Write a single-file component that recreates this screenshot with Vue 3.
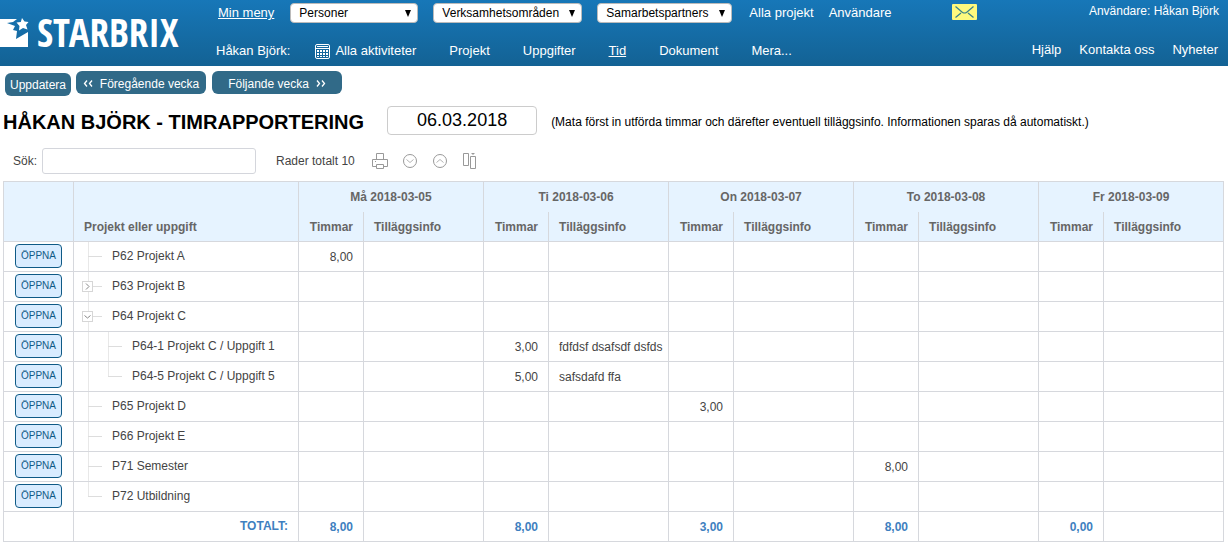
<script setup>
import { ref } from 'vue'

const date = ref('06.03.2018')
const search = ref('')

const days = ['Må 2018-03-05', 'Ti 2018-03-06', 'On 2018-03-07', 'To 2018-03-08', 'Fr 2018-03-09']

const rows = [
  { name: 'P62 Projekt A', level: 0, cells: { 0: ['8,00', ''] } },
  { name: 'P63 Projekt B', level: 0, toggle: 'closed', cells: {} },
  { name: 'P64 Projekt C', level: 0, toggle: 'open', cells: {} },
  { name: 'P64-1 Projekt C / Uppgift 1', level: 1, cells: { 1: ['3,00', 'fdfdsf dsafsdf dsfds'] } },
  { name: 'P64-5 Projekt C / Uppgift 5', level: 1, last: true, cells: { 1: ['5,00', 'safsdafd ffa'] } },
  { name: 'P65 Projekt D', level: 0, cells: { 2: ['3,00', ''] } },
  { name: 'P66 Projekt E', level: 0, cells: {} },
  { name: 'P71 Semester', level: 0, cells: { 3: ['8,00', ''] } },
  { name: 'P72 Utbildning', level: 0, last: true, cells: {} },
]

const totals = ['8,00', '8,00', '3,00', '8,00', '0,00']

const menus = ['Personer', 'Verksamhetsområden', 'Samarbetspartners']
</script>

<template>
  <div class="page">
    <header class="top">
      <a href="#" class="logo">
        <svg width="29" height="29" viewBox="0 0 29 29" aria-hidden="true">
          <path fill="#fff" d="M0 1H17L13 4L7 5L15 8L13 12L17 13L16 21L28 14V29H0Z" />
          <path fill="#fff" d="M22 0L24.500 3.500L28.500 4L26 7L27.500 11.500L23 10L19 12.500L19.500 8L16.500 4.500L20.800 4Z" />
        </svg>
        <span class="brand">STARBRIX</span>
      </a>

      <div class="nav">
        <nav class="line line1">
          <a href="#" class="my current">Min meny</a>
          <span v-for="(m, i) in menus" :key="m" class="pick" :class="'pick' + i">
            <select :aria-label="m"><option>{{ m }}</option></select>
            <svg width="6" height="7" viewBox="0 0 6 7" aria-hidden="true"><path d="M0 0H6L3 7Z" /></svg>
          </span>
          <a href="#" class="all">Alla projekt</a>
          <a href="#">Användare</a>
          <a href="#" class="mail" aria-label="Meddelanden">
            <svg width="25" height="16" viewBox="0 0 25 16">
              <rect width="25" height="16" rx="1" fill="#fdf97e" />
              <path d="M3.500 2.500L10.500 8.500Q12.500 9.500 14.500 8.500L21.500 2.500M3.500 13.500L9 9M21.500 13.500L16 9" fill="none" stroke="#36808c" stroke-width="1.200" />
            </svg>
          </a>
        </nav>
        <nav class="line line2">
          <span>Håkan Björk:</span>
          <a href="#" class="activities">
            <svg width="15" height="15" viewBox="0 0 15 15" aria-hidden="true">
              <rect x=".5" y=".5" width="14" height="14" rx="1.500" fill="none" stroke="#fff" />
              <path d="M2 2.500H13M1 4.500H14" stroke="#fff" />
              <path fill="#fff" d="M2 6H4V8H2ZM5 6H7V8H5ZM8 6H10V8H8ZM11 6H13V8H11ZM2 9H4V11H2ZM5 9H7V11H5ZM8 9H10V11H8ZM11 9H13V11H11ZM2 12H4V13H2ZM5 12H7V13H5ZM8 12H10V13H8ZM11 12H13V13H11Z" />
            </svg>
            Alla aktiviteter
          </a>
          <a href="#">Projekt</a>
          <a href="#">Uppgifter</a>
          <a href="#" class="current">Tid</a>
          <a href="#">Dokument</a>
          <a href="#">Mera...</a>
        </nav>
      </div>

      <div class="user">
        <span class="who">Användare: Håkan Björk</span>
        <nav class="help">
          <a href="#">Hjälp</a>
          <a href="#">Kontakta oss</a>
          <a href="#">Nyheter</a>
        </nav>
      </div>
    </header>

    <main>
      <div class="weeks">
        <button type="button" class="refresh">Uppdatera</button>
        <button type="button" class="week">
          <svg width="10" height="7" viewBox="0 0 10 7" aria-hidden="true"><path d="M4 .5L1.500 3.500L4 6.500M9 .5L6.500 3.500L9 6.500" /></svg>
          Föregående vecka
        </button>
        <button type="button" class="week">
          Följande vecka
          <svg width="10" height="7" viewBox="0 0 10 7" aria-hidden="true"><path d="M1 .5L3.500 3.500L1 6.500M6 .5L8.500 3.500L6 6.500" /></svg>
        </button>
      </div>

      <div class="heading">
        <h1>HÅKAN BJÖRK - TIMRAPPORTERING</h1>
        <input v-model="date" class="date" type="text" aria-label="Datum" />
        <p>(Mata först in utförda timmar och därefter eventuell tilläggsinfo. Informationen sparas då automatiskt.)</p>
      </div>

      <div class="tools">
        <label for="search">Sök:</label>
        <input id="search" v-model="search" class="search" type="text" />
        <span class="count">Rader totalt 10</span>
        <button type="button" class="icon" aria-label="Skriv ut">
          <svg width="16" height="16" viewBox="0 0 16 16">
            <path d="M4.500 6V.5H11.500V6M4 13.500H.5V6.500H15.500V13.500H12M4.500 11.500H11.500V15.500H4.500ZM3 8.500H4" />
          </svg>
        </button>
        <button type="button" class="icon" aria-label="Visa alla">
          <svg width="16" height="16" viewBox="0 0 16 16"><circle cx="8" cy="8" r="6.500" /><path class="soft" d="M4.500 6.500L8 9.500L11.500 6.500" /></svg>
        </button>
        <button type="button" class="icon" aria-label="Dölj alla">
          <svg width="16" height="16" viewBox="0 0 16 16"><circle cx="8" cy="8" r="6.500" /><path class="soft" d="M4.500 9.500L8 6.500L11.500 9.500" /></svg>
        </button>
        <button type="button" class="icon" aria-label="Kolumner">
          <svg width="16" height="16" viewBox="0 0 16 16">
            <path d="M1.500 .5H6.500V12.500H1.500ZM8.500 3.500H13.500V15.500H8.500Z" />
            <path d="M9 0H13L11 2Z" class="solid" />
          </svg>
        </button>
      </div>

      <table>
        <colgroup>
          <col class="c-open" />
          <col class="c-name" />
          <template v-for="d in days" :key="d"><col class="c-time" /><col class="c-info" /></template>
        </colgroup>
        <thead>
          <tr>
            <th rowspan="2"></th>
            <th rowspan="2" class="left low">Projekt eller uppgift</th>
            <th v-for="d in days" :key="d" colspan="2" class="day">{{ d }}</th>
          </tr>
          <tr>
            <template v-for="d in days" :key="d">
              <th class="right sub">Timmar</th>
              <th class="left sub">Tilläggsinfo</th>
            </template>
          </tr>
        </thead>
        <tbody>
          <tr v-for="r in rows" :key="r.name">
            <td class="action"><button type="button" class="open">ÖPPNA</button></td>
            <td class="name">
              <div class="node">
                <svg class="tree" :width="r.level ? 58 : 38" height="29" aria-hidden="true">
                  <path :d="r.level === 0 && r.last ? 'M14.500 0V14.500' : 'M14.500 0V29'" class="faint" />
                  <path v-if="r.level" :d="r.last ? 'M34.500 0V14.500' : 'M34.500 0V29'" class="faint" />
                  <path :d="r.level ? 'M34 14.500H48' : 'M14 14.500H28'" />
                </svg>
                <button v-if="r.toggle" type="button" class="toggle" :aria-label="r.toggle === 'open' ? 'Dölj' : 'Visa'">
                  <svg width="9" height="9" viewBox="0 0 9 9">
                    <path :d="r.toggle === 'open' ? 'M1.500 3.500L4.500 6L7.500 3.500' : 'M3 1.500L6 4.500L3 7.500'" />
                  </svg>
                </button>
                <span class="label">{{ r.name }}</span>
              </div>
            </td>
            <template v-for="(d, i) in days" :key="d">
              <td class="right">{{ r.cells[i] ? r.cells[i][0] : '' }}</td>
              <td class="left">{{ r.cells[i] ? r.cells[i][1] : '' }}</td>
            </template>
          </tr>
        </tbody>
        <tfoot>
          <tr>
            <td></td>
            <td class="right total">TOTALT:</td>
            <template v-for="(t, i) in totals" :key="i">
              <td class="right">{{ t }}</td>
              <td></td>
            </template>
          </tr>
        </tfoot>
      </table>
    </main>
  </div>
</template>

<style>
body {
  background: #fff;
}
</style>

<style scoped>
.page {
  font-family: "Liberation Sans", Arial, sans-serif;
  font-size: 12px;
  line-height: 16px;
  color: #444;
}
.page * {
  box-sizing: border-box;
}
button,
input,
select {
  font: inherit;
  margin: 0;
}
.top {
  display: flex;
  height: 66px;
  background: linear-gradient(#1777b8, #136294);
  color: #fff;
  font-size: 13px;
  white-space: nowrap;
}
.top a {
  color: #fff;
  text-decoration: none;
}
.top a.current {
  text-decoration: underline;
}
.logo {
  display: flex;
  align-items: flex-start;
  gap: 8px;
  width: 216px;
  padding-top: 18px;
}
.brand {
  font-family: "Open Sans Condensed", "Roboto Condensed", "Liberation Sans Narrow", "Liberation Sans", sans-serif;
  font-size: 39px;
  line-height: 28px;
  font-weight: 700;
}
.nav {
  flex: 1;
}
.line {
  display: flex;
  align-items: center;
}
.line1 {
  height: 26px;
}
.line2 {
  height: 50px;
  gap: 33px;
}
.my {
  margin: 0 16px 0 2px;
}
.pick {
  position: relative;
  display: block;
  height: 20px;
  margin-right: 15px;
}
.pick0 {
  width: 128px;
}
.pick1 {
  width: 149px;
}
.pick2 {
  width: 135px;
}
.pick select {
  display: block;
  appearance: none;
  width: 100%;
  height: 20px;
  padding: 0 8px;
  border: 1px solid #bbb;
  border-radius: 4px;
  background: #fff;
  color: #000;
  font-size: 12px;
}
.pick svg {
  position: absolute;
  right: 7px;
  top: 7px;
  pointer-events: none;
}
.all {
  margin: 0 15px 0 2px;
}
.mail {
  margin: -2px 0 0 60px;
}
.mail svg {
  display: block;
}
.activities {
  display: flex;
  align-items: center;
  gap: 5px;
  margin-left: -8px;
}
.user {
  padding: 3px 9px 0 0;
  text-align: right;
}
.who {
  display: block;
  font-size: 12px;
}
.help {
  display: flex;
  justify-content: flex-end;
  gap: 18px;
  padding: 23px 1px 0 0;
}
main {
  padding: 5px 4px 0 3px;
}
.weeks {
  display: flex;
  gap: 6px;
  padding-left: 2px;
}
.weeks button {
  display: flex;
  align-items: center;
  justify-content: center;
  gap: 7px;
  height: 23px;
  padding: 0 5px;
  border: 0;
  border-radius: 6px;
  background: #316a88;
  color: #fff;
  white-space: nowrap;
}
.weeks .refresh {
  margin: 2px -1px 0 0;
}
.weeks .week {
  width: 130px;
  padding-top: 2px;
}
.weeks path {
  fill: none;
  stroke: #fff;
  stroke-width: 1.3;
}
.heading {
  display: flex;
  align-items: center;
  margin-top: 10px;
  color: #000;
}
h1 {
  margin: 0 23px 0 0;
  padding-top: 2px;
  font-size: 20px;
  line-height: 24px;
  white-space: nowrap;
}
.date {
  width: 150px;
  height: 29px;
  padding: 0;
  border: 1px solid #ccc;
  border-radius: 4px;
  background: #fff;
  color: #000;
  font-size: 18px;
  text-align: center;
}
.heading p {
  margin: 0 0 0 14px;
  padding-top: 2px;
}
.tools {
  display: flex;
  align-items: center;
  margin-top: 13px;
  padding-left: 10px;
}
.search {
  width: 214px;
  height: 26px;
  margin: 0 20px 0 5px;
  padding: 0 6px;
  border: 1px solid #d4d6dc;
  border-radius: 3px;
  background: #fff;
}
.count {
  margin-right: 17px;
}
.icon {
  width: 16px;
  height: 16px;
  margin-right: 14px;
  padding: 0;
  border: 0;
  background: none;
}
.icon svg {
  display: block;
  fill: none;
  stroke: #999;
}
.icon .soft {
  stroke: #b4b4b4;
}
.icon .solid {
  fill: #999;
  stroke: none;
}
table {
  width: 100%;
  margin-top: 7px;
  border-collapse: collapse;
  table-layout: fixed;
}
.c-open {
  width: 70px;
}
.c-name {
  width: 225px;
}
.c-time {
  width: 65px;
}
.c-info {
  width: 120px;
}
th,
td {
  height: 30px;
  padding: 0 10px;
  border: 1px solid #d6d8dd;
  white-space: nowrap;
  text-align: center;
}
th {
  background: #e6f3ff;
  color: #666;
}
th.day {
  border-bottom: 0;
}
th.sub {
  padding-top: 2px;
  border-top: 0;
}
th.low {
  padding-bottom: 6px;
  vertical-align: bottom;
}
.left {
  text-align: left;
}
.right {
  text-align: right;
}
td.total {
  padding-bottom: 2px;
}
td.action,
td.name {
  padding: 0;
}
.open {
  display: block;
  width: 47px;
  height: 24px;
  margin: -2px auto 0;
  padding: 0;
  border: 1px solid #0f5a86;
  border-radius: 4px;
  background: #d9ecff;
  color: #0f5a86;
  font-size: 10px;
}
.node {
  position: relative;
  display: flex;
  align-items: center;
  height: 29px;
}
.label {
  padding-bottom: 2px;
}
.tree {
  fill: none;
  stroke: #ddd;
}
.tree .faint {
  stroke: #e8e8e8;
}
.toggle {
  position: absolute;
  left: 8px;
  top: 9px;
  width: 11px;
  height: 11px;
  padding: 0;
  border: 1px solid #d6d6d6;
  background: #fff;
}
.toggle svg {
  display: block;
  fill: none;
  stroke: #888;
}
tfoot td {
  color: #3f7fbf;
  font-weight: 700;
}
</style>
